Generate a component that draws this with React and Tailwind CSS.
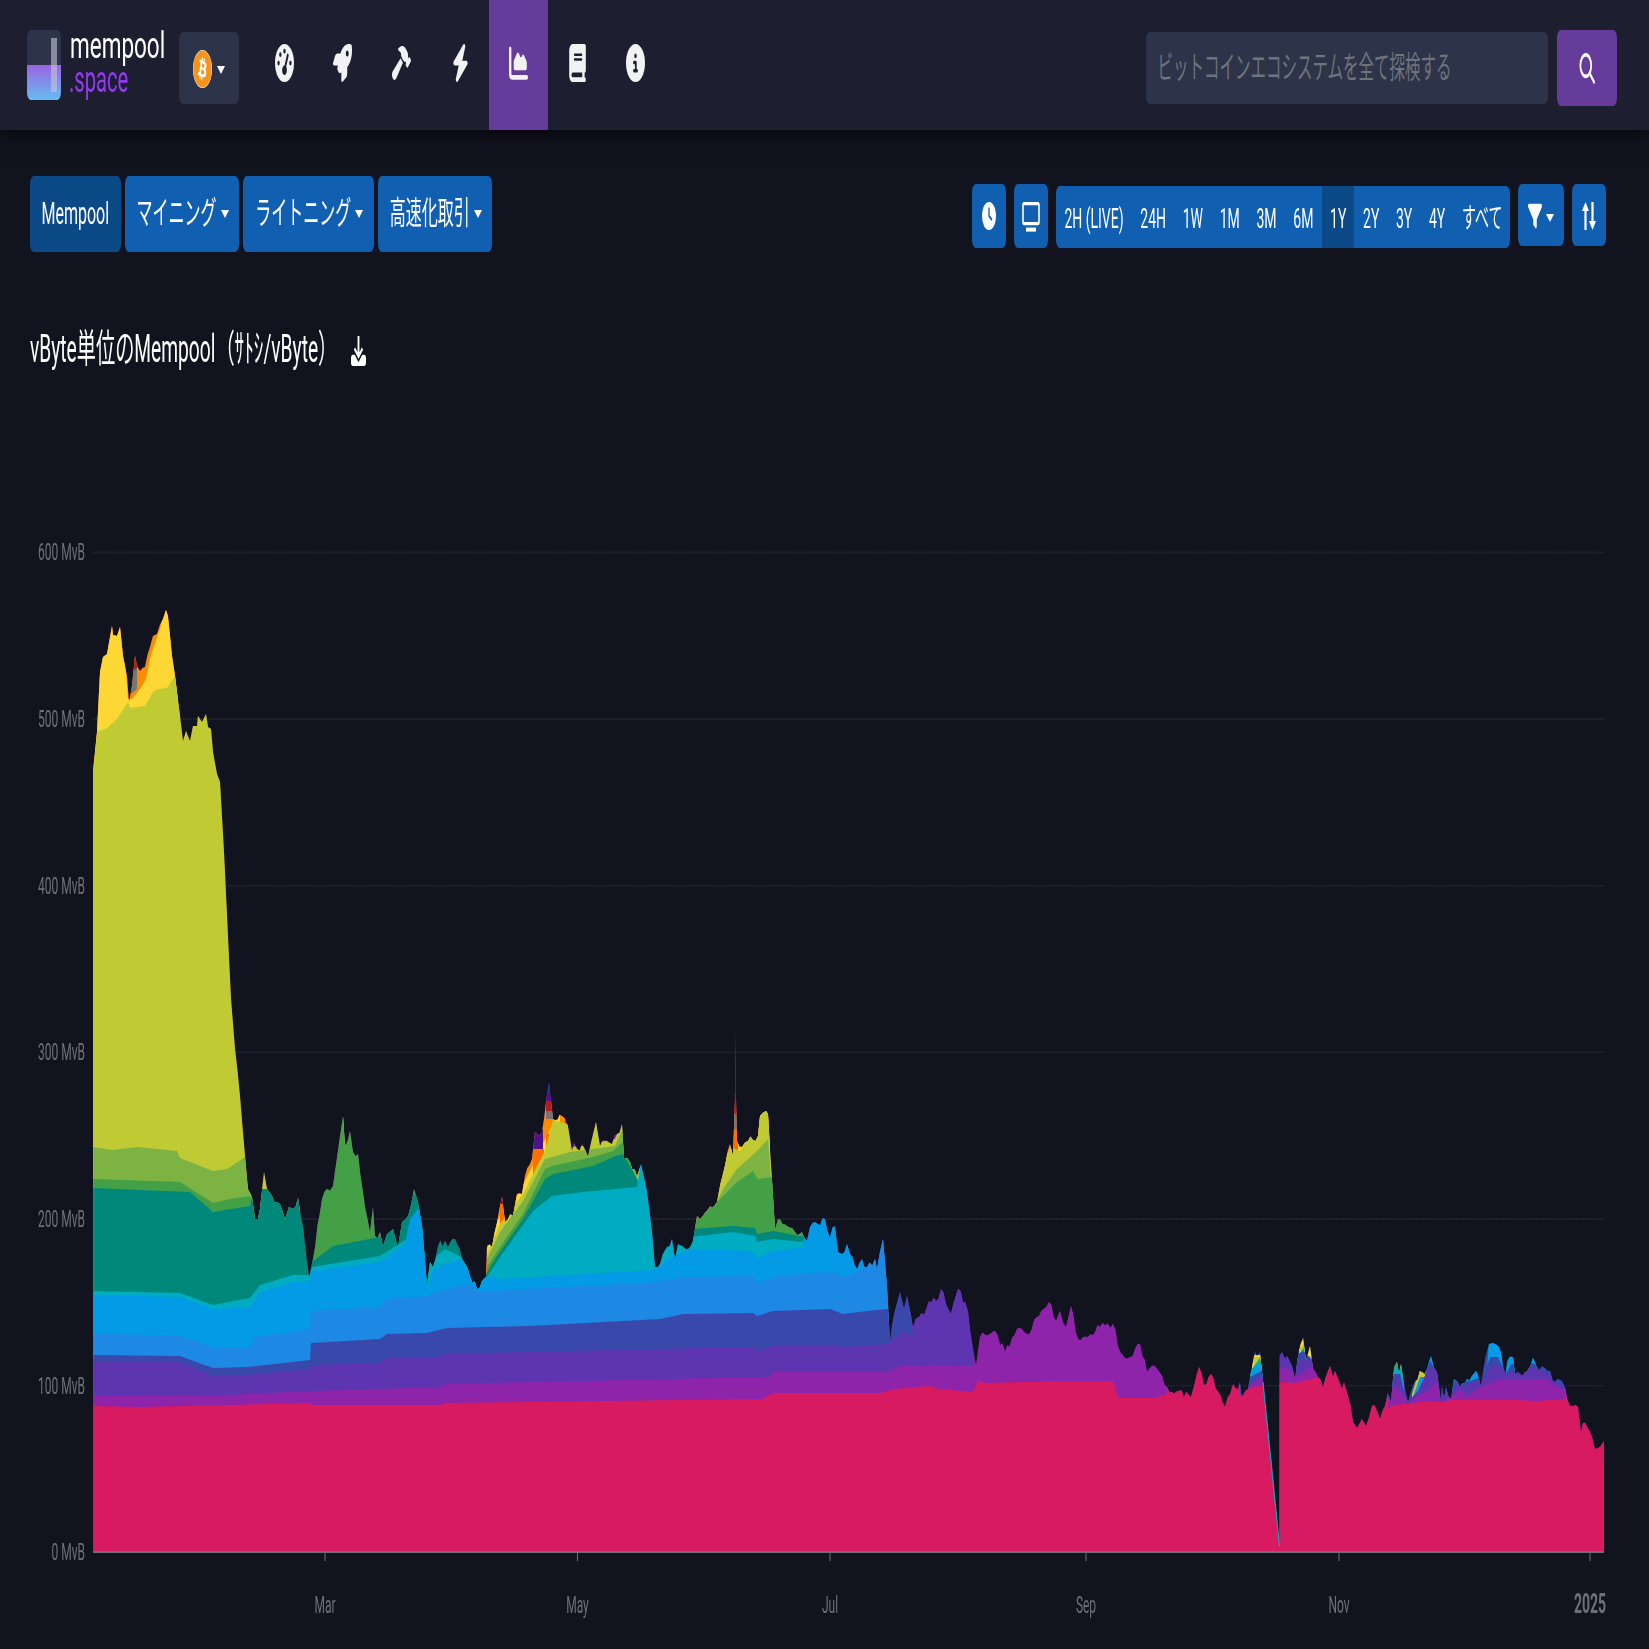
import React from 'react';
import { FaBitcoin } from 'react-icons/fa';
import { FaGaugeHigh, FaRocket, FaHammer, FaBolt, FaChartArea, FaBook, FaCircleInfo, FaClock, FaFilter } from 'react-icons/fa6';

// chart points are in screenshot pixels, y gets halved to page units when drawn
const BASE = 1553;

const OUTLINE = [
  [93.3, 770], [97, 733], [100, 673], [103, 658], [107, 655], [112, 627], [113, 636], [117, 637], [120, 628], [123, 657], [127, 677], [129, 703], [132, 687], [135, 657], [137, 667], [140, 672], [145, 668], [150, 648], [153, 637], [157, 635], [163, 620], [166, 611], [168, 617], [172, 657], [175, 677], [180, 717], [183, 742], [186, 732], [190, 742], [193, 727], [197, 727], [198, 717], [202, 723], [206, 715], [208, 728], [211, 730], [213, 753], [217, 775], [220, 783], [224, 853], [231, 1000],
  [235, 1050], [240, 1097], [245, 1157], [248, 1190], [252, 1198], [255, 1220], [258, 1220], [260, 1210], [264, 1173], [267, 1190], [272, 1197], [277, 1203], [280, 1205], [285, 1220], [289, 1208], [293, 1210], [298, 1199], [303, 1228], [309, 1278], [313, 1260], [322, 1200], [327, 1190], [333, 1187], [343, 1117], [345, 1147], [350, 1132], [353, 1153], [358, 1155], [363, 1193], [370, 1233], [373, 1208], [375, 1237], [380, 1233], [383, 1247], [387, 1235], [393, 1230], [398, 1248], [402, 1223], [408, 1217], [414, 1190], [418, 1203], [422, 1227], [427, 1287], [430, 1263], [433, 1268], [438, 1247], [445, 1242], [448, 1248], [455, 1240], [462, 1260], [470, 1277], [477, 1290], [482, 1282], [486, 1278],
  [487, 1247], [492, 1248], [502, 1198], [505, 1223], [513, 1217], [517, 1195], [522, 1195], [525, 1177], [532, 1160], [535, 1133], [542, 1133], [549, 1083], [553, 1120], [562, 1117], [568, 1127], [572, 1152], [574, 1143], [577, 1150], [582, 1145], [588, 1158], [596, 1123], [600, 1147], [607, 1142], [612, 1145], [617, 1135], [622, 1125], [624, 1160], [630, 1163], [637, 1177], [641, 1165], [647, 1193], [652, 1233], [655, 1268], [658, 1268], [667, 1248], [672, 1240], [675, 1260], [678, 1245], [685, 1250], [693, 1242], [697, 1217], [703, 1217], [717, 1203], [723, 1175], [730, 1145], [733, 1157], [735, 1100], [735.3, 1033], [736, 1100], [737, 1142], [742, 1148], [748, 1142], [758, 1137], [760, 1117], [766, 1112], [768, 1115], [775, 1230], [778, 1220], [787, 1227], [795, 1233], [802, 1233], [807, 1242], [810, 1228], [825, 1220], [830, 1238], [835, 1227], [838, 1253], [842, 1255], [847, 1245], [850, 1255], [857, 1270], [862, 1260], [867, 1268], [875, 1260], [877, 1270], [883, 1240], [887, 1287],
  [890, 1343], [892, 1327], [900, 1293], [904, 1310], [907, 1297], [913, 1328], [919, 1318], [924, 1316], [929, 1302], [936, 1302], [941, 1290], [951, 1315], [958, 1290], [968, 1313], [973, 1350], [976, 1367], [980, 1338], [995, 1332], [1005, 1353], [1017, 1330], [1027, 1335], [1039, 1317], [1049, 1303], [1056, 1322], [1060, 1312], [1066, 1328], [1071, 1307], [1078, 1340], [1088, 1338], [1100, 1328], [1113, 1325], [1120, 1353], [1130, 1358], [1140, 1345], [1147, 1373], [1152, 1367], [1162, 1377], [1167, 1388], [1174, 1395], [1179, 1392], [1191, 1398], [1199, 1368], [1204, 1386], [1211, 1375], [1218, 1393], [1225, 1408], [1233, 1385], [1238, 1390],
  [1240, 1383], [1242, 1398], [1248, 1390], [1250, 1377], [1255, 1352], [1257, 1357], [1260, 1353], [1263, 1383], [1270, 1450], [1279.5, 1547], [1279.7, 1357], [1282, 1353], [1285, 1360], [1287, 1357], [1292, 1367], [1295, 1380], [1299, 1350], [1303, 1338], [1306, 1362], [1310, 1347], [1313, 1370], [1320, 1380], [1323, 1388], [1326, 1377], [1330, 1367], [1333, 1378], [1335, 1372], [1339, 1382], [1342, 1390], [1344, 1383], [1348, 1397], [1353, 1423], [1357, 1429], [1362, 1420], [1366, 1427], [1372, 1407], [1377, 1412], [1380, 1420], [1385, 1407], [1388, 1394], [1391, 1403], [1394, 1368], [1397, 1363], [1399, 1375], [1401, 1365], [1403, 1380], [1408, 1403], [1415, 1382], [1422, 1373], [1425, 1375], [1431, 1357], [1437, 1373], [1441, 1403], [1442, 1387], [1444, 1400], [1446, 1388], [1451, 1400], [1454, 1380], [1460, 1388], [1467, 1380], [1472, 1377], [1476, 1372], [1481, 1388], [1483, 1372], [1489, 1345], [1493, 1344], [1499, 1348], [1506, 1375], [1507, 1362], [1513, 1358], [1515, 1375], [1518, 1373], [1522, 1377], [1527, 1372], [1533, 1359], [1537, 1368], [1542, 1367], [1548, 1372], [1555, 1383], [1562, 1382], [1565, 1388], [1567, 1400], [1573, 1407], [1578, 1408], [1581, 1433], [1583, 1424], [1592, 1438], [1595, 1450], [1600, 1448], [1604, 1442], [1604, BASE], [93.3, BASE],
];

// the traced outline is too clean, the real series has small teeth everywhere
const roughen = (pts) => {
  const out = [];
  pts.forEach((a, i) => {
    out.push(a);
    const b = pts[i + 1];
    if (!b || a[1] === BASE || b[1] === BASE) return;
    const n = Math.floor((b[0] - a[0]) / 2.2);
    for (let k = 1; k < n; k++) {
      const x = a[0] + ((b[0] - a[0]) * k) / n;
      const y = a[1] + ((b[1] - a[1]) * k) / n;
      const noise = Math.abs((Math.sin(x * 12.9898) * 43758.5453) % 1) - 0.5;
      out.push([x, y + noise * (x < 231 ? 4 : 8)]);
    }
  });
  return out;
};

// back to front, each island closes down to the axis and gets clipped by OUTLINE
const LAYERS = [
  { color: '#FB8C00', islands: [[[93, 500], [180, 500]], [[480, 1100], [565, 1100]], [[695, 1100], [770, 1100]]] },
  { color: '#FDD835', islands: [
    [[93, 700], [105, 640], [112, 622], [120, 622], [125, 660], [128, 700], [132, 700], [140, 690], [146, 680], [150, 660], [153, 650], [160, 630], [166, 605], [172, 640], [178, 690]],
    [[487, 1250], [495, 1225], [503, 1212], [518, 1195], [530, 1172], [540, 1150], [553, 1125], [560, 1110]],
    [[720, 1180], [727, 1155], [740, 1140], [770, 1100]],
    [[343, 1100], [346, 1100], [346, 1170], [343, 1170]],
    [[1252, 1356], [1262, 1356]], [[1300, 1345], [1304, 1338], [1312, 1345], [1313, 1370]], [[1394, 1385], [1397, 1350], [1403, 1350]],
  ] },
  { color: '#FF6F00', islands: [[[500, 1195], [506, 1195], [506, 1240], [500, 1240]], [[533, 1150], [544, 1150], [544, 1170], [533, 1180]], [[546, 1135], [553, 1135], [553, 1165], [546, 1165]], [[733, 1130], [738, 1130], [738, 1180], [733, 1180]]] },
  { color: '#757575', islands: [[[546, 1112], [553, 1112], [553, 1120], [546, 1120]], [[733, 1115], [738, 1115], [738, 1130], [733, 1130]], [[131, 670], [137, 665], [137, 690], [131, 695]]] },
  { color: '#B71C1C', islands: [[[546, 1102], [553, 1102], [553, 1112], [546, 1112]], [[733, 1095], [738, 1095], [738, 1115], [733, 1115]], [[133, 655], [138, 655], [138, 668], [133, 672]]] },
  { color: '#4A148C', islands: [[[546, 1094], [553, 1094], [553, 1102], [546, 1102]], [[733, 1075], [738, 1075], [738, 1095], [733, 1095]], [[533, 1130], [543, 1130], [543, 1150], [533, 1150]], [[500, 1195], [506, 1195], [506, 1205], [500, 1205]]] },
  { color: '#283593', islands: [[[546, 1080], [553, 1080], [553, 1094], [546, 1094]], [[733, 1030], [738, 1030], [738, 1075], [733, 1075]]] },
  { color: '#C0CA33', islands: [
    [[93, 780], [97, 733], [107, 729], [117, 720], [128, 703], [130, 709], [145, 707], [153, 693], [158, 690], [167, 689], [175, 677], [180, 600], [246, 600], [247, 1157], [300, 1165]],
    [[487, 1255], [500, 1225], [523, 1195], [537, 1167], [545, 1152], [553, 1121], [568, 1125], [572, 1148], [590, 1146], [596, 1118], [600, 1143], [615, 1140], [622, 1122], [640, 1160]],
    [[716, 1205], [723, 1172], [730, 1148], [740, 1152], [768, 1105], [770, 1140], [775, 1220]],
    [[1254, 1358], [1262, 1358], [1264, 1385]], [[1299, 1350], [1304, 1344], [1307, 1370]], [[1412, 1395], [1420, 1368], [1426, 1368], [1428, 1395]],
  ] },
  { color: '#7CB342', islands: [
    [[93, 1148], [113, 1151], [137, 1148], [177, 1152], [180, 1159], [213, 1172], [227, 1170], [245, 1158], [248, 1192], [270, 1200]],
    [[487, 1260], [500, 1233], [523, 1202], [545, 1160], [570, 1153], [593, 1150], [615, 1147], [625, 1125], [640, 1190]],
    [[700, 1216], [717, 1203], [723, 1190], [737, 1170], [757, 1152], [768, 1140], [774, 1220]],
  ] },
  { color: '#43A047', islands: [
    [[93, 1180], [180, 1183], [213, 1204], [230, 1200], [250, 1197], [253, 1205]],
    [[312, 1100], [374, 1100], [376, 1239], [380, 1233], [400, 1218], [414, 1188], [426, 1188], [430, 1290]],
    [[487, 1268], [502, 1245], [523, 1215], [545, 1170], [552, 1167], [593, 1158], [613, 1152], [623, 1143], [640, 1190]],
    [[680, 1240], [693, 1225], [700, 1215], [720, 1200], [737, 1183], [753, 1172], [758, 1180], [772, 1178], [776, 1210], [805, 1210], [808, 1240]],
    [[1256, 1366], [1260, 1358], [1264, 1380]], [[1299, 1356], [1304, 1348], [1306, 1370]], [[1393, 1368], [1397, 1352], [1403, 1352], [1404, 1368]],
  ] },
  { color: '#00897B', islands: [
    [[93, 1189], [190, 1193], [213, 1213], [250, 1207], [253, 1190], [309, 1190], [312, 1263], [333, 1247], [380, 1238], [405, 1215], [414, 1195], [425, 1195], [427, 1262], [430, 1200], [470, 1200], [486, 1275]],
    [[486, 1275], [497, 1257], [523, 1220], [545, 1180], [553, 1175], [593, 1167], [613, 1158], [623, 1155], [637, 1180], [640, 1187]],
    [[680, 1240], [693, 1230], [733, 1227], [755, 1229], [757, 1235], [773, 1232], [805, 1238]],
  ] },
  { color: '#00ACC1', islands: [
    [[93, 1292], [180, 1294], [213, 1306], [250, 1299], [260, 1286], [293, 1276], [310, 1276], [312, 1268], [380, 1257], [407, 1240], [422, 1225], [430, 1262], [445, 1250], [470, 1262], [480, 1272], [487, 1278], [500, 1258], [533, 1212], [552, 1197], [583, 1193], [637, 1188], [641, 1160], [655, 1200], [690, 1238], [733, 1233], [755, 1237], [757, 1243], [773, 1240], [803, 1243], [812, 1240]],
    [[1250, 1372], [1258, 1362], [1263, 1368]], [[1296, 1360], [1303, 1350], [1310, 1362]], [[1392, 1376], [1397, 1366], [1404, 1372]], [[1416, 1390], [1422, 1380]], [[1452, 1388], [1467, 1372], [1478, 1368]], [[1506, 1368], [1514, 1345], [1517, 1375]], [[1531, 1368], [1534, 1350], [1538, 1372]],
  ] },
  { color: '#039BE5', islands: [
    [[93, 1296], [180, 1298], [213, 1310], [250, 1308], [260, 1293], [293, 1283], [310, 1282], [311, 1272], [380, 1263], [405, 1245], [410, 1220], [422, 1205], [427, 1290], [433, 1270], [440, 1267], [460, 1260], [472, 1277], [490, 1278], [500, 1280], [653, 1271], [660, 1267], [670, 1258], [690, 1250], [753, 1252], [757, 1260], [770, 1253], [803, 1248], [807, 1210], [886, 1210], [889, 1340]],
    [[1252, 1372], [1258, 1366], [1263, 1372]], [[1296, 1362], [1303, 1354], [1309, 1364]], [[1392, 1385], [1397, 1374], [1404, 1382]], [[1414, 1395], [1420, 1378], [1426, 1378]], [[1427, 1372], [1431, 1350], [1437, 1374]], [[1452, 1392], [1454, 1374], [1478, 1372], [1480, 1390]], [[1487, 1372], [1489, 1340], [1500, 1340], [1503, 1372]], [[1506, 1372], [1510, 1350], [1515, 1350], [1516, 1378]], [[1530, 1372], [1533, 1352], [1537, 1374]],
  ] },
  { color: '#1E88E5', islands: [
    [[93, 1334], [180, 1337], [213, 1348], [250, 1348], [257, 1338], [293, 1333], [310, 1330], [311, 1312], [380, 1308], [387, 1300], [427, 1297], [447, 1290], [470, 1285], [478, 1292], [490, 1292], [657, 1283], [683, 1278], [753, 1277], [757, 1284], [777, 1277], [832, 1273], [843, 1278], [867, 1268], [883, 1240], [889, 1240], [890, 1345]],
    [[1256, 1378], [1262, 1374], [1264, 1388]],
  ] },
  { color: '#3949AB', islands: [
    [[93, 1356], [180, 1357], [213, 1369], [247, 1368], [293, 1363], [310, 1361], [311, 1344], [380, 1340], [387, 1335], [427, 1334], [447, 1329], [530, 1327], [660, 1320], [683, 1315], [753, 1314], [757, 1317], [773, 1312], [830, 1310], [843, 1315], [867, 1312], [888, 1310], [891, 1343], [892, 1290], [912, 1290], [914, 1400]],
    [[1250, 1378], [1262, 1372], [1264, 1388]], [[1290, 1360], [1303, 1352], [1312, 1360], [1316, 1385]], [[1390, 1385], [1394, 1375], [1400, 1375], [1406, 1400]], [[1425, 1375], [1430, 1362], [1436, 1372], [1450, 1388], [1456, 1380], [1470, 1382], [1484, 1377], [1490, 1358], [1498, 1358], [1506, 1375], [1512, 1364], [1518, 1372], [1533, 1364], [1548, 1375], [1560, 1390]],
  ] },
  { color: '#5E35B1', islands: [
    [[93, 1362], [180, 1363], [213, 1377], [247, 1376], [290, 1372], [310, 1370], [313, 1366], [380, 1364], [387, 1359], [433, 1359], [447, 1355], [530, 1353], [657, 1350], [753, 1348], [757, 1352], [773, 1347], [830, 1346], [843, 1348], [887, 1345], [892, 1342], [903, 1332], [913, 1338], [916, 1280], [973, 1280], [974, 1400]],
    [[1250, 1385], [1262, 1376], [1264, 1390]], [[1279, 1340], [1296, 1340], [1298, 1362], [1306, 1360], [1316, 1360], [1320, 1385]], [[1385, 1405], [1392, 1378], [1400, 1382], [1408, 1402], [1418, 1392], [1428, 1370], [1437, 1368], [1441, 1395], [1450, 1392], [1456, 1387], [1467, 1387], [1476, 1382], [1483, 1380], [1490, 1368], [1498, 1366], [1506, 1374], [1515, 1372], [1535, 1368], [1550, 1376], [1570, 1395], [1578, 1412]],
  ] },
  { color: '#8E24AA', islands: [
    [[93, 1396], [140, 1397], [230, 1396], [290, 1393], [313, 1392], [440, 1388], [447, 1385], [530, 1383], [770, 1378], [773, 1373], [887, 1373], [900, 1367], [920, 1367], [929, 1366], [975, 1367], [977, 1250], [1172, 1250], [1175, 1400]],
    [[1245, 1390], [1262, 1378], [1264, 1392]], [[1279, 1368], [1290, 1370], [1295, 1378], [1305, 1372], [1315, 1365], [1320, 1372], [1323, 1395]],
    [[1385, 1410], [1392, 1388], [1403, 1395], [1408, 1405], [1417, 1397], [1427, 1392], [1437, 1382], [1441, 1403], [1450, 1398], [1460, 1391], [1467, 1397], [1480, 1388], [1500, 1380], [1523, 1380], [1547, 1380], [1555, 1387], [1565, 1390], [1573, 1407], [1580, 1420]],
  ] },
  { color: '#D81B60', islands: [[
    [93, 1407], [140, 1408], [230, 1406], [310, 1404], [313, 1406], [440, 1406], [447, 1404], [530, 1403], [763, 1400], [773, 1394], [880, 1394], [895, 1390], [929, 1387], [939, 1390], [973, 1393], [978, 1382], [985, 1384], [1027, 1383], [1113, 1382], [1118, 1399], [1154, 1399], [1167, 1395], [1170, 1300], [1239, 1300], [1240, 1397], [1247, 1390], [1260, 1387], [1263, 1387], [1279, 1383], [1295, 1384], [1320, 1378], [1322, 1300], [1387, 1300], [1388, 1410], [1392, 1406], [1408, 1405], [1427, 1402], [1440, 1403], [1453, 1401], [1513, 1401], [1537, 1402], [1565, 1400], [1567, 1300], [1604, 1300],
  ]] },
];

const GRID = [
  { label: '600 MvB', y: 553.5 },
  { label: '500 MvB', y: 720 },
  { label: '400 MvB', y: 886.7 },
  { label: '300 MvB', y: 1053.3 },
  { label: '200 MvB', y: 1220 },
  { label: '100 MvB', y: 1386.6 },
  { label: '0 MvB', y: 1553 },
];

const TICKS = [
  { label: 'Mar', x: 325 },
  { label: 'May', x: 577.5 },
  { label: 'Jul', x: 830 },
  { label: 'Sep', x: 1086 },
  { label: 'Nov', x: 1339 },
  { label: '2025', x: 1590, bold: true },
];

const toPoints = (pts) => pts.map(([x, y]) => `${x},${y / 2}`).join(' ');

const RANGES = ['2H (LIVE)', '24H', '1W', '1M', '3M', '6M', '1Y', '2Y', '3Y', '4Y', 'すべて'];

const NAV_ICONS = [FaGaugeHigh, FaRocket, FaHammer, FaBolt, FaChartArea, FaBook, FaCircleInfo];

const Caret = () => (
  <span className="inline-block w-0 h-0 border-x-[4.8px] border-x-transparent border-t-[4.8px] border-t-white" />
);

const Logo = () => (
  <svg viewBox="0 0 34 35" className="w-[34px] h-[35px] shrink-0">
    <defs>
      <linearGradient id="logo-water" x1="0" y1="0" x2="0" y2="1">
        <stop offset="0" stopColor="#9b62e6" />
        <stop offset="1" stopColor="#66bdf0" />
      </linearGradient>
    </defs>
    <rect width="34" height="35" rx="4" fill="#2d3348" />
    <path d="M0 17.5h34V31a4 4 0 0 1-4 4H4a4 4 0 0 1-4-4z" fill="url(#logo-water)" />
    <rect x="24" y="4" width="6" height="27" fill="#c4c7d4" opacity="0.6" />
  </svg>
);

const Chart = () => (
  <svg viewBox="0 191.5 1649 633" className="block w-[1649px] h-[633px]" style={{ fontFamily: 'Roboto, sans-serif' }}>
    <defs>
      <clipPath id="mempool-outline">
        <polygon points={toPoints(roughen(OUTLINE))} />
      </clipPath>
    </defs>
    {GRID.map((g) => (
      <g key={g.label}>
        {g.y < 1500 && <line x1="93" x2="1604" y1={g.y / 2} y2={g.y / 2} stroke="#252732" strokeWidth="0.9" strokeDasharray="1.5 1" />}
        <text x="85" y={g.y / 2 + 4} textAnchor="end" fontSize="12" fill="#6e7079">{g.label}</text>
      </g>
    ))}
    <g clipPath="url(#mempool-outline)">
      <rect x="93" y="250" width="1147" height="540" fill="#8E24AA" />
      <rect x="1240" y="250" width="364" height="540" fill="#3949AB" />
      {LAYERS.map((layer) =>
        layer.islands.map((pts, i) => (
          <polygon
            key={layer.color + i}
            fill={layer.color}
            points={toPoints([...pts, [pts[pts.length - 1][0], BASE], [pts[0][0], BASE]])}
          />
        ))
      )}
    </g>
    <line x1="1263" y1={1383 / 2} x2="1279.5" y2={1547 / 2} stroke="#00ACC1" strokeWidth="1.1" />
    <line x1="93" x2="1604" y1={BASE / 2} y2={BASE / 2} stroke="#6e7079" strokeWidth="1" />
    {TICKS.map((t) => (
      <g key={t.label}>
        <line x1={t.x} x2={t.x} y1={BASE / 2} y2={BASE / 2 + 4.5} stroke="#6e7079" strokeWidth="1" />
        <text x={t.x} y="807" textAnchor="middle" fontSize={t.bold ? 14 : 12} fontWeight={t.bold ? 700 : 400} fill="#6e7079">{t.label}</text>
      </g>
    ))}
  </svg>
);

export default function App() {
  return (
    <div className="w-[1649px] h-[1649px] overflow-hidden bg-[#11131f]">
      <div
        className="w-[1649px] h-[824.5px] origin-top-left scale-y-[2] text-white"
        style={{ fontFamily: 'Roboto, "Noto Sans CJK JP", sans-serif' }}
      >
        <nav className="relative z-10 flex items-start h-[64.5px] pl-[27px] bg-[#1d1f31] shadow-[0_0_15px_#000]">
          <div className="flex mt-[14.5px]">
            <Logo />
            <div className="ml-[9px] w-[109px] -mt-[0.5px]">
              <div className="text-[18px] leading-[18px] origin-left scale-x-[1.25]">mempool</div>
              <div className="text-[18px] leading-[15px] text-[#9339f4] origin-left scale-x-[1.12] -ml-[1px]">.space</div>
            </div>
          </div>
          <div className="flex items-center justify-center gap-[5px] w-[60px] h-9 mt-[16.25px] rounded bg-[#2d3348]">
            <span className="flex items-center justify-center w-[19px] h-[19px] rounded-full bg-white">
              <FaBitcoin className="text-[19px] text-[#f7931a]" />
            </span>
            <span className="-mt-[4px]"><Caret /></span>
          </div>
          <div className="flex h-full ml-[16px]">
            {NAV_ICONS.map((Icon, i) => (
              <div key={i} className={`flex items-center justify-center w-[58.6px] h-full pb-[1.5px] ${i === 4 ? 'bg-[#653b9c]' : ''}`}>
                <Icon className="text-[19px] text-[#f2f2f2]" />
              </div>
            ))}
          </div>
          <div className="flex items-start ml-auto mr-[32px] gap-[9px]">
            <div className="flex items-center w-[402.5px] h-9 mt-4 pl-3 pt-[2px] rounded bg-[#2d3348] text-[15.5px] text-[#6c757d]">
              ビットコインエコシステムを全て探検する
            </div>
            <div className="flex items-center justify-center w-[60px] h-[38px] mt-[15px] rounded bg-[#653b9c]">
              <svg viewBox="0 0 16 16" className="w-4 h-4" fill="none" stroke="#fff" strokeWidth="1.8">
                <circle cx="6.8" cy="6.8" r="5.4" />
                <path d="M10.8 10.8 15 15" strokeLinecap="round" />
              </svg>
            </div>
          </div>
        </nav>

        <div className="flex justify-between items-start mt-[23.5px] pl-[30px] pr-[43px]">
          <div className="flex gap-1 text-base">
            <div className="flex items-center h-[38px] px-[11.5px] pt-[0.5px] rounded bg-[#0c4a87]">Mempool</div>
            {['マイニング', 'ライトニング', '高速化取引'].map((label) => (
              <div key={label} className="flex items-center gap-[4px] h-[38px] pl-3 pr-[10.5px] pt-[0.5px] rounded bg-[#105fb0]">
                {label}
                <Caret />
              </div>
            ))}
          </div>
          <div className="flex items-start gap-2 mt-1 text-sm">
            <div className="flex items-center justify-center w-[34.3px] h-8 rounded bg-[#105fb0]"><FaClock className="text-[14px]" /></div>
            <div className="flex items-center justify-center w-[34.3px] h-8 rounded bg-[#105fb0]">
              <svg viewBox="0 0 18 15" className="w-[18px] h-[15px]" fill="none" stroke="#fff">
                <rect x="1" y="0.8" width="16" height="10" rx="1" strokeWidth="1.6" />
                <path d="M4 13.8h10" strokeWidth="2" />
              </svg>
            </div>
            <div className="flex w-[454px] h-[31px] mt-px rounded bg-[#105fb0] justify-between overflow-hidden">
              {RANGES.map((r) => (
                <div key={r} className={`flex items-center px-2 ${r === '1Y' ? 'bg-[#0c4a87]' : ''}`}>{r}</div>
              ))}
            </div>
            <div className="flex items-center justify-center gap-[4px] w-[45.6px] h-[31px] rounded bg-[#105fb0]">
              <FaFilter className="text-[14px]" />
              <span className="-mt-[3px]"><Caret /></span>
            </div>
            <div className="flex items-center justify-center w-[34px] h-[31px] rounded bg-[#105fb0]">
              <svg viewBox="0 0 14 14" className="w-[14px] h-[14px]" fill="#fff">
                <path d="M3.5 0 7 4.5H4.6V14H2.4V4.5H0zM10.5 14 7 9.5h2.4V0h2.2v9.5H14z" />
              </svg>
            </div>
          </div>
        </div>

        <div className="flex items-center h-[30px] mt-[34px] mb-px pl-[30px] text-[19.2px] leading-[30px]">
          vByte単位のMempool（ｻﾄｼ/vByte）
          <svg viewBox="0 0 16 16" className="w-[15px] h-[15px] ml-[14px]" fill="#fff">
            <path d="M7 0h2v8.6l2.6-2.6 1.3 1.3L8 12.2 3.1 7.3 4.4 6 7 8.6z" />
            <path d="M0 12a2 2 0 0 1 2-2h2l4 4 4-4h2a2 2 0 0 1 2 2v2a2 2 0 0 1-2 2H2a2 2 0 0 1-2-2z" />
          </svg>
        </div>

        <Chart />
      </div>
    </div>
  );
}
